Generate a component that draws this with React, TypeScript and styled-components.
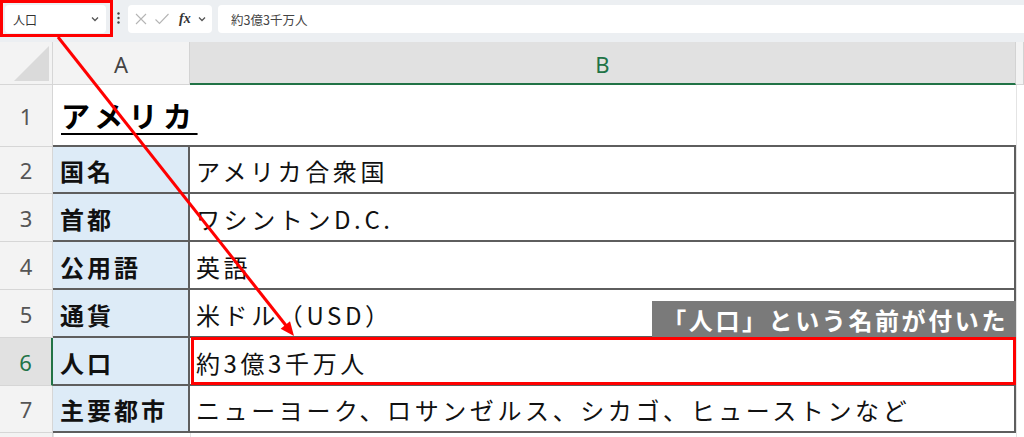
import React from 'react';
import styled, { createGlobalStyle } from 'styled-components';

const GlobalStyle = createGlobalStyle`
  html, body {
    margin: 0;
    padding: 0;
    background: #ffffff;
  }
  body {
    font-family: "Noto Sans CJK JP", "Noto Sans", sans-serif;
  }
`;

const Page = styled.div`
  position: relative;
  width: 1024px;
  height: 437px;
  overflow: hidden;
  background: #ffffff;
`;

/* ---------- formula bar ---------- */

const Toolbar = styled.div`
  height: 42px;
  display: flex;
  align-items: flex-start;
  background: #eceff2;
  box-sizing: border-box;
`;

const NameFrame = styled.div`
  width: 113px;
  height: 37px;
  box-sizing: border-box;
  border: 3px solid #ff0000;
  padding: 2px 4px 1px 2px;
  display: flex;
`;

const NameBox = styled.div`
  flex: 1;
  display: flex;
  align-items: center;
  justify-content: space-between;
  background: #ffffff;
  border-radius: 4px;
  padding: 0 6px 0 8px;
  font-size: 12px;
  color: #333;
`;

const Dots = styled.div`
  width: 11px;
  margin-top: 12px;
  display: flex;
  justify-content: center;
`;

const FxBox = styled.div`
  width: 84px;
  height: 28px;
  margin: 5px 0 0 4px;
  background: #ffffff;
  border-radius: 4px;
  display: flex;
  align-items: center;
  padding: 0 4px 0 6px;
  box-sizing: border-box;
  gap: 6px;
`;

const FxLabel = styled.span`
  font-family: "Liberation Serif", serif;
  font-style: italic;
  font-weight: bold;
  font-size: 14px;
  color: #333;
  margin-left: 3px;
`;

const FormulaBox = styled.div`
  flex: 1;
  height: 28px;
  margin: 5px 0 0 6px;
  background: #ffffff;
  border-radius: 4px 0 0 4px;
  display: flex;
  align-items: center;
  padding-left: 13px;
  font-size: 12.5px;
  color: #444;
`;

/* ---------- sheet ---------- */

const Sheet = styled.div`
  display: grid;
  grid-template-columns: 53px 137px 826px 8px;
  grid-template-rows: 43px 62px 47px 48px 48px 48px 48px 47px 30px;
`;

const Corner = styled.div`
  background: #f3f3f3;
  border-right: 1px solid #d6d6d6;
  border-bottom: 1px solid #d6d6d6;
  display: flex;
  align-items: flex-end;
  justify-content: flex-end;
  padding: 0 3px 3px 0;
`;

const ColHeader = styled.div<{ $active?: boolean }>`
  background: ${p => (p.$active ? '#e1e1e1' : '#f3f3f3')};
  color: ${p => (p.$active ? '#217346' : '#444')};
  border-right: 1px solid #d3d3d3;
  border-bottom: ${p => (p.$active ? '2px solid #217346' : '1px solid #d6d6d6')};
  display: flex;
  align-items: center;
  justify-content: center;
  font-family: "Noto Sans", sans-serif;
  font-size: 22px;
  padding-top: 2px;
`;

const RowHeader = styled.div<{ $active?: boolean }>`
  background: ${p => (p.$active ? '#e1e1e1' : '#f3f3f3')};
  color: ${p => (p.$active ? '#217346' : '#555')};
  border-right: ${p => (p.$active ? '2px solid #217346' : '1px solid #d6d6d6')};
  border-bottom: 1px solid #d6d6d6;
  display: flex;
  align-items: center;
  justify-content: center;
  font-family: "Noto Sans", sans-serif;
  font-size: 22px;
`;

const Blank = styled.div`
  background: #ffffff;
  border-left: 1px solid #e4e4e4;
`;

const TitleCell = styled.div`
  grid-column: 2 / 4;
  border-bottom: 2px solid #5e5e5e;
  display: flex;
  align-items: center;
  padding-left: 8px;
  font-size: 29px;
  font-weight: 700;
  letter-spacing: 5.5px;
  color: #000;
  white-space: nowrap;
`;

const Title = styled.span`
  text-decoration: underline;
  text-decoration-thickness: 2px;
  text-underline-offset: 5px;
`;

const Cell = styled.div<{ $label?: boolean; $marked?: boolean }>`
  position: relative;
  background: ${p => (p.$label ? '#ddebf7' : '#ffffff')};
  border-right: 2px solid #5e5e5e;
  border-bottom: 2px solid #5e5e5e;
  display: flex;
  align-items: center;
  padding-left: ${p => (p.$label ? '7px' : '6px')};
  padding-top: 2px;
  font-size: 24px;
  font-weight: ${p => (p.$label ? 700 : 400)};
  letter-spacing: ${p => (p.$label ? '3px' : '3.6px')};
  color: #111;
  white-space: nowrap;

  ${p =>
    p.$marked &&
    `
    &::after {
      content: '';
      position: absolute;
      left: 1px;
      top: -1px;
      right: -2px;
      bottom: -1px;
      border: 3px solid #ff0000;
      z-index: 2;
    }
  `}
`;

/* ---------- annotations ---------- */

const Callout = styled.div`
  position: absolute;
  left: 652px;
  top: 301px;
  width: 364px;
  height: 36px;
  box-sizing: border-box;
  background: #7a7a7a;
  color: #ffffff;
  font-size: 24px;
  font-weight: 700;
  letter-spacing: 2.6px;
  display: flex;
  align-items: center;
  justify-content: flex-end;
  padding-right: 8px;
  white-space: nowrap;
  z-index: 3;
`;

const ArrowLayer = styled.svg`
  position: absolute;
  left: 0;
  top: 0;
  pointer-events: none;
  z-index: 4;
`;

const rows = [
  { n: 2, label: '国名', value: 'アメリカ合衆国' },
  { n: 3, label: '首都', value: 'ワシントンD.C.' },
  { n: 4, label: '公用語', value: '英語' },
  { n: 5, label: '通貨', value: '米ドル（USD）' },
  { n: 6, label: '人口', value: '約3億3千万人', active: true },
  { n: 7, label: '主要都市', value: 'ニューヨーク、ロサンゼルス、シカゴ、ヒューストンなど' },
];

const Chevron = () => (
  <svg width="10" height="10" viewBox="0 0 10 10">
    <path d="M2 3.5 L5 6.5 L8 3.5" fill="none" stroke="#555" strokeWidth="1.3" />
  </svg>
);

export default function App() {
  return (
    <Page>
      <GlobalStyle />
      <Toolbar>
        <NameFrame>
          <NameBox>
            <span>人口</span>
            <Chevron />
          </NameBox>
        </NameFrame>
        <Dots>
          <svg width="3" height="12" viewBox="0 0 3 12">
            <circle cx="1.5" cy="1.5" r="1.2" fill="#444" />
            <circle cx="1.5" cy="6" r="1.2" fill="#444" />
            <circle cx="1.5" cy="10.5" r="1.2" fill="#444" />
          </svg>
        </Dots>
        <FxBox>
          <svg width="14" height="14" viewBox="0 0 14 14">
            <path d="M2 2 L12 12 M12 2 L2 12" stroke="#b5b5b5" strokeWidth="1.1" fill="none" />
          </svg>
          <svg width="16" height="14" viewBox="0 0 16 14">
            <path d="M1.5 7.5 L5.5 11.5 L14.5 2" stroke="#b5b5b5" strokeWidth="1.1" fill="none" />
          </svg>
          <FxLabel>fx</FxLabel>
          <Chevron />
        </FxBox>
        <FormulaBox>約3億3千万人</FormulaBox>
      </Toolbar>

      <Sheet>
        <Corner>
          <svg width="35" height="35" viewBox="0 0 35 35">
            <polygon points="35,0 35,35 0,35" fill="#dadada" />
          </svg>
        </Corner>
        <ColHeader>A</ColHeader>
        <ColHeader $active>B</ColHeader>
        <ColHeader />

        <RowHeader>1</RowHeader>
        <TitleCell>
          <Title>アメリカ</Title>
        </TitleCell>
        <Blank />

        {rows.map(r => (
          <React.Fragment key={r.n}>
            <RowHeader $active={r.active}>{r.n}</RowHeader>
            <Cell $label>{r.label}</Cell>
            <Cell $marked={r.active}>{r.value}</Cell>
            <Blank />
          </React.Fragment>
        ))}

        <RowHeader />
        <Blank />
        <Blank />
        <Blank />
      </Sheet>

      <Callout>「人口」という名前が付いた</Callout>

      <ArrowLayer width="1024" height="437" viewBox="0 0 1024 437">
        <line x1="58" y1="37" x2="288" y2="328" stroke="#ff0000" strokeWidth="3" />
        <polygon points="294,336 280.6,328.7 290,321.3" fill="#ff0000" />
      </ArrowLayer>
    </Page>
  );
}
